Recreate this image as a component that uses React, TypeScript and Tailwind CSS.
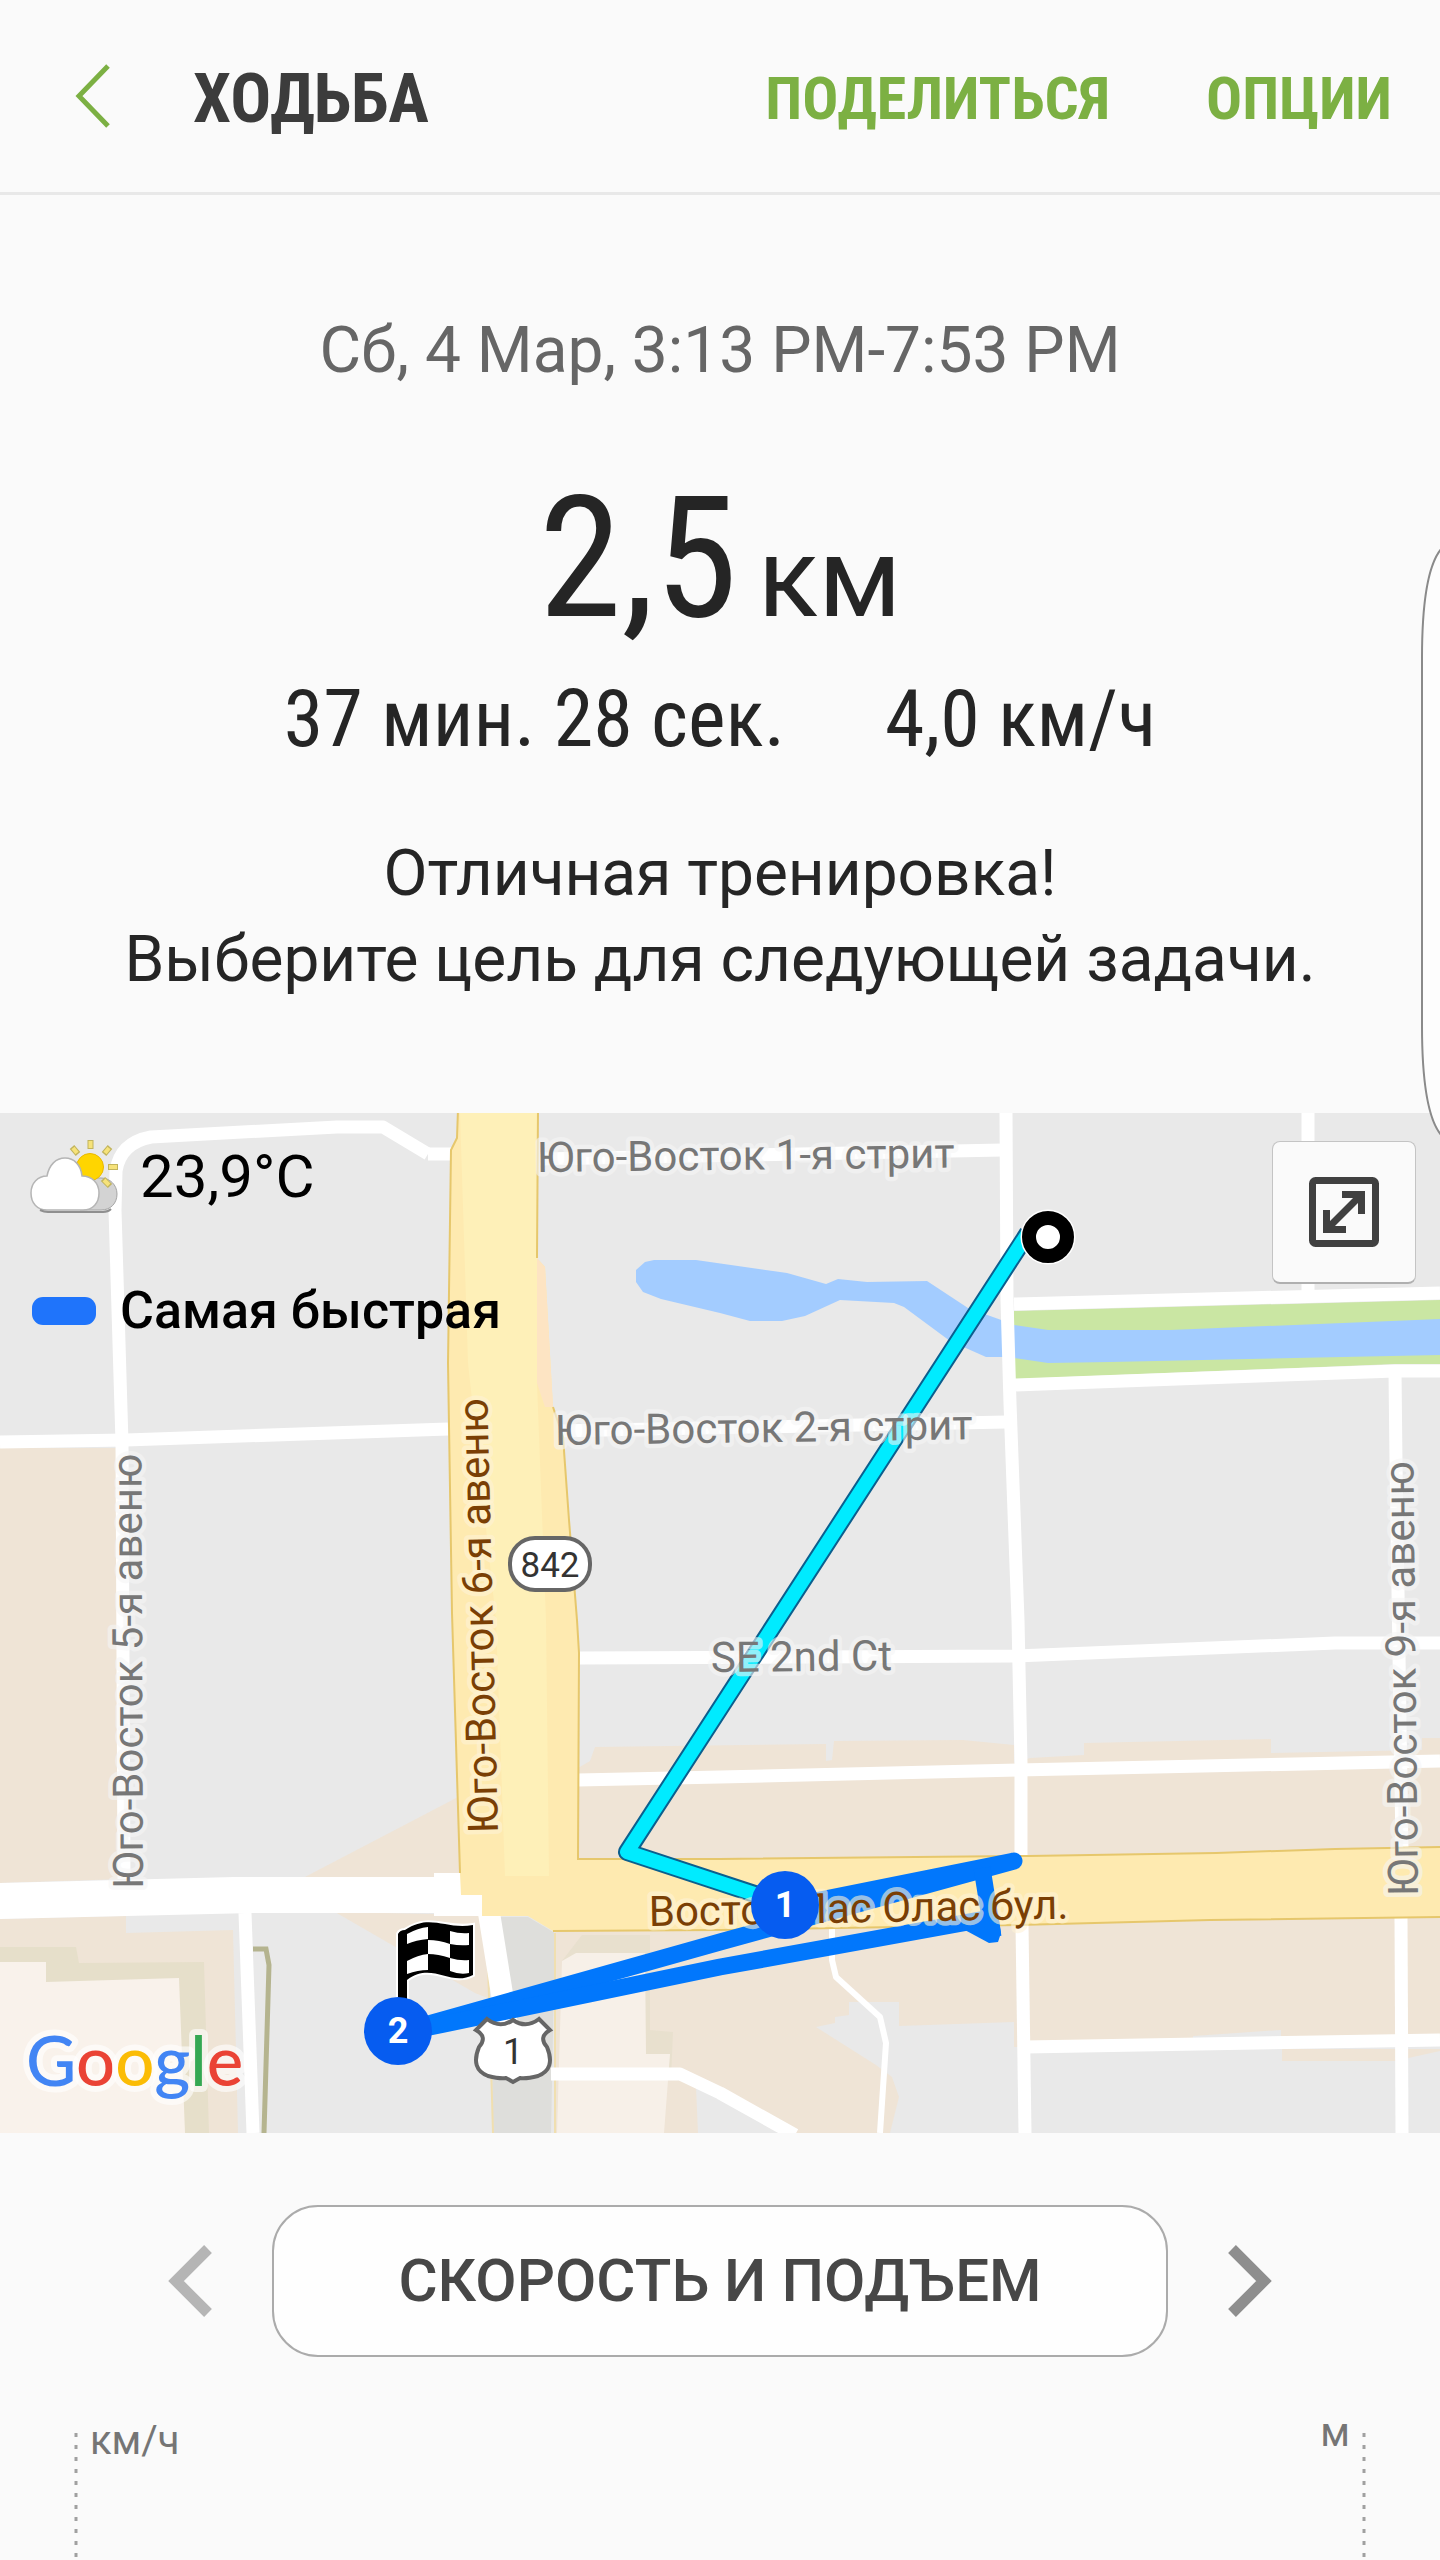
import { useState } from "react"

const roads = [
  "M428 41 H452",
  "M124 766 L122 330 L115 97 L116 58 Q120 30 151 24 L337 14 H383 L428 41",
  "M0 329 L126 327 L448 316",
  "M540 46 L1003 37",
  "M556 318 L1006 309",
  "M579 545 L1014 543 L1335 530 H1440",
  "M578 667 L720 664 L1018 657 L1440 648",
  "M1006 0 L1007 187 L1010 290 L1018 507 L1021 650 V742",
  "M1022 812 L1025 1020",
  "M1308 0 V180",
  "M1395 259 L1396 350 L1402 735",
  "M1401 804 L1402 1020",
  "M1025 934 L1440 927",
  "M1014 191 L1440 180",
  "M1014 272 L1395 258 H1440",
  "M245 800 L253 1020",
  "M551 961 H680 L720 980 L795 1022",
]

interface MapLabel {
  text: string
  x: number
  y: number
  rotate: number
  main?: boolean
}

const mapLabels: MapLabel[] = [
  { text: "Юго-Восток 1-я стрит", x: 537, y: 59, rotate: -0.6 },
  { text: "Юго-Восток 2-я стрит", x: 555, y: 332, rotate: -0.8 },
  { text: "SE 2nd Ct", x: 711, y: 559, rotate: -0.6 },
  { text: "Юго-Восток 5-я авеню", x: 143, y: 776, rotate: -90.2 },
  { text: "Юго-Восток 6-я авеню", x: 498, y: 720, rotate: -91.4, main: true },
  { text: "Юго-Восток 9-я авеню", x: 1418, y: 783, rotate: -90.6 },
  { text: "Восток Лас Олас бул.", x: 649, y: 813, rotate: -1, main: true },
]

function Marker({ x, y, label }: { x: number; y: number; label: string }) {
  return (
    <g>
      <circle cx={x} cy={y} r="34" fill="#065cf0" />
      <text x={x} y={y + 12} textAnchor="middle" fontSize="36" fontWeight="700" fill="#fff">{label}</text>
    </g>
  )
}

function RouteMap() {
  return (
    <svg viewBox="0 0 1440 1020" className="block h-auto w-full" role="img" aria-label="Маршрут">
      <rect width="1440" height="1020" fill="#e9e9e9" />

      {/* Blocks */}
      <g fill="#efe4d6">
        <path d="M0 335 H118 L124 766 L0 770Z" />
        <path d="M460 683 L303 765 H462Z" />
        <path d="M0 806 L126 803 V820 L233 817 L238 1020 H0Z" />
        <path d="M335 799 L482 802 L490 886 L475 880Z" />
        <path d="M578 655 L590 648 L595 634 L826 631 V648 L832 647 L834 628 L963 627 L1014 632 V650 L1030 645 L1084 642 V630 L1271 626 V640 L1422 637 V625 H1440 V927 L1030 934 H1014 V909 L899 913 V889 H849 V902 L835 904 V910 L816 914 L876 952 L892 964 L899 984 L890 1020 H795 L696 974 L698 1020 H555 V746 H578Z" />
        <path d="M1282 936 H1440 V938 L1395 948 H1282Z" />
      </g>
      <path d="M1193 923 L1281 917 V928 H1193Z" fill="#e9e9e9" />

      {/* Buildings */}
      <path d="M0 834 H76 L79 850 L204 849 L209 1020 H0Z" fill="#e6dfca" />
      <path d="M0 849 H46 V869 L179 865 L185 1020 H0Z" fill="#f9f2eb" />
      <path d="M562 848 L582 822 H650 V917 L673 919 L671 966 L646 942Z" fill="#e8e0ce" />
      <path d="M562 848 L576 840 H645 L646 941 H670 L664 1020 H557Z" fill="#f7f0e8" />
      <path d="M500 804 H528 L555 820 L551 1020 H493 L491 900Z" fill="#dededb" />
      <path d="M555 820 V1020 M488 850 L493 1020" fill="none" stroke="#f0dfb0" strokeWidth="2" />
      <path d="M253 836 H266 L269 852 L264 1020" fill="none" stroke="#b5b48f" strokeWidth="5" />

      {/* Water */}
      <path d="M1014 198 L1440 187 V251 H1395 L1014 266Z" fill="#cae6a3" />
      <path d="M1014 212 L1048 217 H1170 L1440 206 V242 L1110 249 L1048 250 L1014 245Z" fill="#a3ccff" />
      <path d="M636 157 L645 149 L654 147 H696 L787 160 L826 171 L838 166 L867 169 L927 168 L968 195 L1004 208 V244 H986 L950 228 L904 194 L894 190 L840 187 L805 203 L782 208 H750 L720 200 L661 186 L643 179 L636 169Z" fill="#a3ccff" />

      {/* Roads */}
      <g fill="none" stroke="#fff" strokeWidth="13" strokeLinejoin="round">
        {roads.map((d) => <path key={d} d={d} />)}
        <path d="M832 815 V847 L836 864 L880 904 L886 930 L880 1020" strokeWidth="6" />
        <path d="M489 800 L507 912" strokeWidth="22" />
      </g>
      <path d="M0 770 L234 764 H434 V760 H465 V782 H484 V803 H434 V800 H253 L0 806Z" fill="#fff" />
      <path d="M458 -4 L457 25 L451 37 L448 250 L452 500 L460 760 L461 782 H482 V803 H528 L553 818 L720 817 L1018 812 L1210 807 L1444 804 V734 L1335 736 L1216 740 L1028 743 L720 746 H578 L579 540 L577 507 L569 407 L563 324 L553 294 L545 154 L537 145 L538 -4Z" fill="#feeab0" />
      <path d="M460 0 H538 L537 270 L546 507 L549 763 H505 L496 507 L468 250Z" fill="#fef0b8" />
      <path d="M537 145 L545 154 L553 294 L545 294 L537 270Z" fill="#fde4c3" />
      <path d="M458 -4 L457 25 L451 37 L448 250 L452 500 L460 760 M553 818 L720 817 L1018 812 L1210 807 L1444 804 M1444 734 L1335 736 L1216 740 L1028 743 L720 746 H578 L579 540 L577 507 L569 407 L563 324 L553 294 M537 145 L538 -4" fill="none" stroke="#e6c76c" strokeWidth="2" />

      {/* Track */}
      <g fill="none" strokeLinejoin="round">
        <path d="M1028 120 L627 739 L785 791" stroke="#0b5f8e" strokeWidth="18" />
        <path d="M1028 120 L627 739 L785 791" stroke="#00ebff" strokeWidth="14" />
        <g stroke="#0177fc" strokeWidth="17">
          <path d="M425 912 L720 829 L1014 748 L785 794" />
          <path d="M425 915 L720 854 L985 806" />
          <path d="M982 755 L993 824" />
        </g>
      </g>
      <path d="M960 802 L998 800 L1001 820 L998 829 L989 830 L963 816Z" fill="#0177fc" />

      {mapLabels.map((l) => (
        <text
          key={l.text}
          transform={`translate(${l.x} ${l.y}) rotate(${l.rotate})`}
          fontSize="42"
          fill={l.main ? "#7a3f05" : "#777"}
          stroke={l.main ? "#fff3d6" : "#f5f5f5"}
          strokeOpacity="0.6"
          strokeWidth="9"
          strokeLinejoin="round"
          paintOrder="stroke"
        >
          {l.text}
        </text>
      ))}

      {/* Road shields */}
      <rect x="510" y="425" width="80" height="52" rx="25" fill="#fff" stroke="#666" strokeWidth="4" />
      <text x="550" y="464" textAnchor="middle" fontSize="35" fill="#333">842</text>
      <path d="M487 906 Q500 916 513 907 Q526 916 539 906 L550 917 Q538 924 547 934 Q556 956 538 963 Q526 966 520 965 L513 969 L506 965 Q500 966 488 963 Q470 956 479 934 Q488 924 476 917Z" fill="#fff" stroke="#666" strokeWidth="4" />
      <text x="513" y="951" textAnchor="middle" fontSize="36" fill="#333">1</text>

      {/* Finish flag */}
      <path d="M398 887 V821 Q400 817 405 817 C430 800 446 817 473 812 V862 C450 874 432 848 407 867 V887Z" fill="#000" stroke="#fff" strokeWidth="4" paintOrder="stroke" />
      <g fill="#fff">
        <path d="M407 821 Q418 815 428 814 V826 Q416 827 407 831Z" />
        <path d="M450 818 Q460 821 469 820 V832 Q460 833 450 831Z" />
        <path d="M428 827 Q439 827 450 831 V845 Q438 841 428 841Z" />
        <path d="M407 848 Q418 842 428 841 V857 Q418 857 407 861Z" />
        <path d="M450 845 Q460 848 469 847 V860 Q460 862 450 858Z" />
      </g>

      <Marker x={398} y={918} label="2" />
      <Marker x={785} y={792} label="1" />
      <circle cx="1048" cy="124" r="20" fill="#fff" stroke="#fff" strokeWidth="15" />
      <circle cx="1048" cy="124" r="19" fill="#fff" stroke="#000" strokeWidth="14" />

      <text x="26" y="973" fontSize="69" fontWeight="500" className="font-[Lato]" stroke="#fff" strokeOpacity="0.6" strokeWidth="12" strokeLinejoin="round" paintOrder="stroke">
        <tspan fill="#4285f4">G</tspan>
        <tspan fill="#ea4335">o</tspan>
        <tspan fill="#fbbc05">o</tspan>
        <tspan fill="#4285f4">g</tspan>
        <tspan fill="#34a853">l</tspan>
        <tspan fill="#ea4335">e</tspan>
      </text>
    </svg>
  )
}

function WeatherIcon() {
  return (
    <svg viewBox="0 0 90 76" className="h-[76px] w-[90px]" aria-hidden="true">
      <path d="M50 71h21c10 0 16-7 16-16s-7-16-16-16H56z" fill="#d3d3d3" stroke="#a5a5a5" />
      <path d="M60.500 1v9M42 8l6 7M80 8l-6 7M78 28h10M73 40l7 7" stroke="#c2b45c" strokeWidth="6" />
      <path d="M60.500 2v7M43 9l4 5M79 9l-4 5M79 28h8M74 41l5 5" stroke="#f6e27a" strokeWidth="4" />
      <circle cx="60" cy="28" r="13.500" fill="#ffd500" stroke="#eab800" />
      <path d="M17 71C7 71 1 64 1 54s7-17 16-17c2-11 9-18 18-18s16 7 17 18c10 0 17 7 17 17s-6 17-16 17z" fill="#fff" stroke="#b5b5b5" strokeWidth="1.5" />
      <path d="M10 71q4 2 8 2h55q5 0 8-3" fill="none" stroke="#8f8f8f" strokeWidth="2" />
    </svg>
  )
}

function Chevron({ className, d, width }: { className: string; d: string; width: number }) {
  return (
    <svg viewBox="0 0 45 72" className={className} fill="none" stroke="currentColor" strokeWidth={width} aria-hidden="true">
      <path d={d} />
    </svg>
  )
}

function DottedAxis() {
  return (
    <svg className="mt-5 h-auto w-1 self-stretch" aria-hidden="true">
      <line x1="2" y1="0" x2="2" y2="600" stroke="#a0a0a0" strokeWidth="3" strokeDasharray="4 8" />
    </svg>
  )
}

const charts = ["СКОРОСТЬ И ПОДЪЕМ", "ПУЛЬС"]

export default function App() {
  const [chart, setChart] = useState(0)

  return (
    <div className="relative flex min-h-screen flex-col overflow-hidden bg-[#fafafa] font-[Roboto,sans-serif] text-[#252525]">
      {/* Header */}
      <header className="flex h-[195px] items-center border-b-[3px] border-[#e8e8e8] pr-12 pl-[72px] font-['Roboto_Condensed',Roboto,sans-serif] font-bold">
        <button type="button" aria-label="Назад" className="mr-[76px] text-[#7cb043]">
          <Chevron className="h-[72px] w-[45px]" d="M36 6 L7 36 L36 66" width={5} />
        </button>
        <h1 className="flex-1 pt-1.5 text-[68px] leading-[80px] text-[#3c3c3c]">ХОДЬБА</h1>
        <nav className="flex gap-24 pt-1.5 text-[60px] leading-[80px] text-[#7cb043]">
          <button type="button">ПОДЕЛИТЬСЯ</button>
          <button type="button">ОПЦИИ</button>
        </nav>
      </header>

      {/* Summary */}
      <section className="flex flex-col items-center pt-28 pb-[110px] text-center">
        <p className="text-[64px] leading-[88px] text-[#666]">Сб, 4 Мар, 3:13 PM-7:53 PM</p>
        <p className="mt-16 flex h-[200px] items-baseline gap-5 leading-[200px]">
          <span className="font-['Roboto_Condensed',Roboto,sans-serif] text-[168px]">2,5</span>
          <span className="text-[112px]">км</span>
        </p>
        <p className="mt-3 flex gap-[100px] font-['Roboto_Condensed',Roboto,sans-serif] text-[80px] leading-[96px]">
          <span>37 мин. 28 сек.</span>
          <span>4,0 км/ч</span>
        </p>
        <p className="mt-16 text-[64px] leading-[86px]">
          Отличная тренировка!<br />Выберите цель для следующей задачи.
        </p>
      </section>

      {/* Map */}
      <section className="relative text-black">
        <RouteMap />
        <div className="absolute top-6 left-[30px] flex items-center gap-5">
          <WeatherIcon />
          <span className="text-[60px] leading-[80px]">23,9°C</span>
        </div>
        <div className="absolute top-[166px] left-8 flex items-center gap-6">
          <span className="h-7 w-16 rounded-[11px] bg-[#1f74fb]" />
          <span className="text-[52px] leading-[64px] font-medium">Самая быстрая</span>
        </div>
        <button type="button" aria-label="Развернуть карту" className="absolute top-7 right-6 flex h-[143px] w-36 items-center justify-center rounded-lg border border-b-2 border-[#c4c4c4] border-b-[#b0b0b0] bg-[#fafafa] text-[#404040]">
          <svg viewBox="0 0 70 70" className="size-[70px]" fill="none" stroke="currentColor" strokeWidth="7" aria-hidden="true">
            <rect x="3.5" y="3.5" width="63" height="63" rx="3" />
            <path d="M33 17.500h19.500v19.500M17.500 33v19.500h19.500M51 19 19 51" />
          </svg>
        </button>
      </section>

      {/* Chart switcher */}
      <div className="mt-[72px] flex items-center gap-[59px] px-[168px]">
        <button type="button" aria-label="Предыдущий график" className="text-[#b5b5b5]" onClick={() => setChart(0)}>
          <Chevron className="h-[72px] w-[45px]" d="M40 4 L8 36 L40 68" width={11} />
        </button>
        <button type="button" className="h-[152px] flex-1 rounded-[46px] border-2 border-[#ababab] bg-[#fefefe] text-[60px] leading-[80px] font-medium text-[#474747]">
          {charts[chart]}
        </button>
        <button type="button" aria-label="Следующий график" className="text-[#8e8e8e]" onClick={() => setChart(1)}>
          <Chevron className="h-[72px] w-[45px]" d="M5 4 L37 36 L5 68" width={11} />
        </button>
      </div>

      {/* Chart */}
      <section className="mt-14 flex flex-1 gap-3 px-[74px] text-[40px] leading-10 text-[#757575]">
        <DottedAxis />
        <span className="mt-2 flex-1">км/ч</span>
        <span>м</span>
        <DottedAxis />
      </section>

      {/* Edge panel handle */}
      <svg viewBox="0 0 20 588" className="absolute top-[548px] right-0 h-[588px] w-5" aria-hidden="true">
        <path d="M22 0 Q2 22 2 110 V478 Q2 566 22 588" fill="#fdfdfd" stroke="#8a8a8a" strokeWidth="2" />
      </svg>
    </div>
  )
}
